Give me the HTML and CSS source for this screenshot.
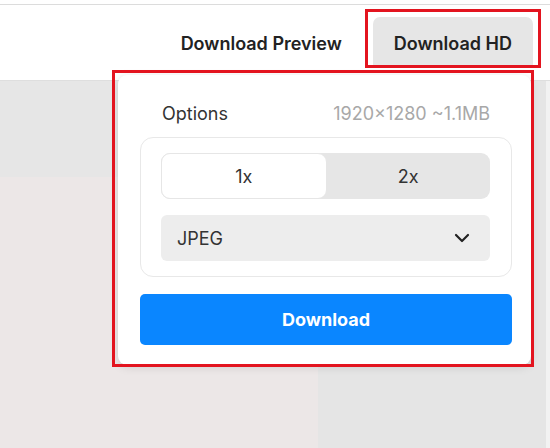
FILE: index.html
```html
<!DOCTYPE html>
<html>
<head>
<meta charset="utf-8">
<link rel="stylesheet" href="styles.css">
</head>
<body>
<div class="page">
  <div class="topbar"></div>
  <header class="header">
    <nav class="nav">
      <button class="nav-btn">Download Preview</button>
      <button class="nav-btn active">Download HD</button>
    </nav>
  </header>
  <main class="main">
    <div class="left-pane">
      <div class="left-top"></div>
      <div class="left-image"></div>
    </div>
    <div class="right-pane"></div>
    <div class="edge-strip"></div>
  </main>

  <div class="popover">
    <div class="pop-head">
      <span class="pop-title">Options</span>
      <span class="pop-meta">1920×1280 ~1.1MB</span>
    </div>
    <div class="opt-box">
      <div class="segmented">
        <button class="seg active">1x</button>
        <button class="seg">2x</button>
      </div>
      <div class="select">
        <span>JPEG</span>
        <svg class="chev" width="16" height="10" viewBox="0 0 16 10"><path d="M2 2 L8 8 L14 2" fill="none" stroke="#222" stroke-width="2.2" stroke-linecap="round" stroke-linejoin="round"/></svg>
      </div>
    </div>
    <button class="dl-btn">Download</button>
  </div>

  <div class="mark mark-hd"></div>
  <div class="mark mark-pop"></div>
</div>
</body>
</html>
```

FILE: styles.css
```css
* { box-sizing: border-box; }
html, body { margin: 0; padding: 0; }
body {
  font-family: Inter, "Noto Sans", "Liberation Sans", sans-serif;
  width: 550px;
  height: 448px;
  overflow: hidden;
  background: #e6e6e6;
}
.page {
  position: relative;
  width: 550px;
  height: 448px;
  display: flex;
  flex-direction: column;
}
.topbar {
  height: 4px;
  background: #fff;
  flex-shrink: 0;
}
.header {
  height: 77px;
  background: #fff;
  border-top: 1px solid #dcdcdc;
  border-bottom: 1px solid #dedede;
  display: flex;
  justify-content: flex-end;
  padding-right: 17px;
  flex-shrink: 0;
}
.nav {
  display: flex;
  gap: 10px;
  padding-top: 12px;
  align-items: flex-start;
}
.nav-btn {
  font-family: inherit;
  font-size: 18px;
  font-weight: 600;
  color: #222;
  background: transparent;
  border: none;
  height: 50px;
  padding: 3px 21px 0;
  border-radius: 7px 7px 0 0;
}
.nav-btn.active { background: #e6e6e6; }
.main {
  flex: 1;
  display: flex;
}
.left-pane {
  width: 318px;
  display: flex;
  flex-direction: column;
}
.left-top { height: 96px; background: #e6e6e6; }
.left-image { flex: 1; background: #ece7e7; }
.right-pane { flex: 1; background: #e5e5e5; }
.edge-strip { width: 4px; background: #f2f2f2; }

.popover {
  position: absolute;
  left: 118px;
  top: 75px;
  width: 413px;
  height: 290px;
  background: #fff;
  border-radius: 9px;
  box-shadow: 0 2px 10px rgba(0,0,0,0.12);
  padding: 20px 19px 0 22px;
  display: flex;
  flex-direction: column;
}
.pop-head {
  display: flex;
  justify-content: space-between;
  align-items: center;
  padding: 0 22px 0 22px;
  height: 36px;
  font-size: 18px;
}
.pop-title { color: #333; }
.pop-meta { color: #a8a8a8; }
.opt-box {
  margin-top: 6px;
  border: 1px solid #e8e8e8;
  border-radius: 13px;
  padding: 15px 21px 15px 20px;
  display: flex;
  flex-direction: column;
  gap: 16px;
}
.segmented {
  display: flex;
  height: 46px;
  background: #e6e6e6;
  border-radius: 9px;
}
.seg {
  flex: 1;
  border: none;
  background: transparent;
  font-family: inherit;
  font-size: 18px;
  color: #333;
  border-radius: 9px;
}
.seg.active { background: #fff; border: 1px solid #e6e6e6; }
.select {
  height: 46px;
  background: #ededed;
  border-radius: 6px;
  display: flex;
  align-items: center;
  justify-content: space-between;
  padding: 0 20px 0 16px;
  font-size: 18px;
  color: #333;
}
.dl-btn {
  margin-top: 17px;
  height: 51px;
  background: #0a86ff;
  color: #fff;
  border: none;
  border-radius: 5px;
  font-family: inherit;
  font-size: 18px;
  font-weight: 700;
}

.mark {
  position: absolute;
  border: 3px solid #e3141f;
  pointer-events: none;
}
.mark-hd { left: 365px; top: 9px; width: 176px; height: 59px; }
.mark-pop { left: 112px; top: 70px; width: 422px; height: 297px; }
```
